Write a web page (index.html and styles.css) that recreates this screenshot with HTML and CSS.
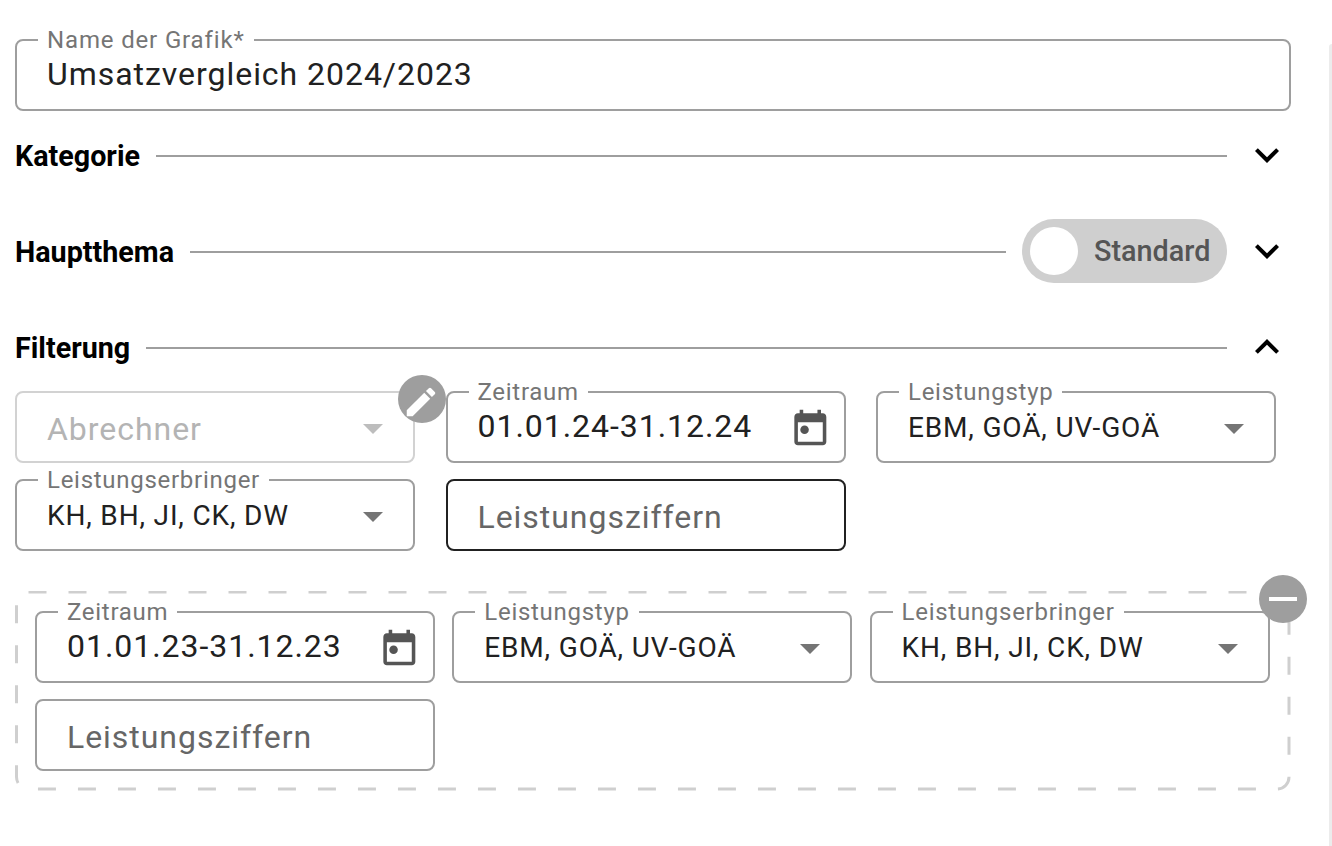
FILE: index.html
```html
<!DOCTYPE html>
<html lang="de">
<head>
<meta charset="utf-8">
<title>Grafik</title>
<link rel="stylesheet" href="styles.css">
</head>
<body>
<svg class="defs" width="0" height="0" aria-hidden="true">
  <symbol id="cal" viewBox="0 0 24 24"><path fill-rule="evenodd" d="M19 3h-1V1h-2v2H8V1H6v2H5c-1.1 0-2 .9-2 2v14c0 1.1.9 2 2 2h14c1.1 0 2-.9 2-2V5c0-1.1-.9-2-2-2zm0 16H5V8h14v11z"/><circle cx="8.75" cy="12.25" r="2.4"/></symbol>
  <symbol id="arrow" viewBox="0 0 24 24"><path d="M7 10l5 5 5-5z"/></symbol>
  <symbol id="down" viewBox="0 0 24 24"><path d="M16.59 8.59 12 13.17 7.41 8.59 6 10l6 6 6-6z"/></symbol>
  <symbol id="up" viewBox="0 0 24 24"><path d="M12 8l-6 6 1.41 1.41L12 10.83l4.59 4.58L18 14z"/></symbol>
</svg>
<main class="page">
  <div class="field">
    <span class="label name">Name der Grafik*</span>
    <span class="value large">Umsatzvergleich 2024/2023</span>
  </div>

  <section class="head">
    <h2>Kategorie</h2><span class="rule"></span>
    <svg class="chev"><use href="#down"/></svg>
  </section>
  <section class="head">
    <h2>Hauptthema</h2><span class="rule"></span>
    <div class="switch"><span class="thumb"></span><span class="switch-text">Standard</span></div>
    <svg class="chev"><use href="#down"/></svg>
  </section>
  <section class="head last">
    <h2>Filterung</h2><span class="rule"></span>
    <svg class="chev"><use href="#up"/></svg>
  </section>

  <div class="grid main-grid">
    <div class="field disabled">
      <span class="placeholder">Abrechner</span>
      <svg class="arrow"><use href="#arrow"/></svg>
      <span class="badge"><svg class="pencil" viewBox="0 0 24 24"><path d="M3 17.25V21h3.75L17.81 9.94l-3.75-3.75L3 17.25zM20.71 7.04c.39-.39.39-1.02 0-1.41l-2.34-2.34a.9959.9959 0 0 0-1.41 0l-1.83 1.83 3.75 3.75 1.83-1.83z"/></svg></span>
    </div>
    <div class="field">
      <span class="label">Zeitraum</span>
      <span class="value date">01.01.24-31.12.24</span>
      <svg class="cal"><use href="#cal"/></svg>
    </div>
    <div class="field">
      <span class="label">Leistungstyp</span>
      <span class="value">EBM, GOÄ, UV-GOÄ</span>
      <svg class="arrow"><use href="#arrow"/></svg>
    </div>
    <div class="field">
      <span class="label">Leistungserbringer</span>
      <span class="value">KH, BH, JI, CK, DW</span>
      <svg class="arrow"><use href="#arrow"/></svg>
    </div>
    <div class="field focused">
      <span class="placeholder">Leistungsziffern</span>
    </div>
  </div>

  <div class="compare">
    <svg class="dash" width="1276" height="200"><rect x="1.5" y="1" width="1272.5" height="197" rx="12" ry="12"/></svg>
    <span class="badge minus"><svg class="bar" viewBox="0 0 24 24"><path d="M19 13H5v-2h14v2z"/></svg></span>
    <div class="grid inner-grid">
      <div class="field">
        <span class="label">Zeitraum</span>
        <span class="value date">01.01.23-31.12.23</span>
        <svg class="cal"><use href="#cal"/></svg>
      </div>
      <div class="field">
        <span class="label">Leistungstyp</span>
        <span class="value">EBM, GOÄ, UV-GOÄ</span>
        <svg class="arrow"><use href="#arrow"/></svg>
      </div>
      <div class="field">
        <span class="label">Leistungserbringer</span>
        <span class="value">KH, BH, JI, CK, DW</span>
        <svg class="arrow"><use href="#arrow"/></svg>
      </div>
      <div class="field">
        <span class="placeholder">Leistungsziffern</span>
      </div>
    </div>
  </div>
</main>
<div class="scrollbar"></div>
</body>
</html>
```

FILE: styles.css
```css
* { box-sizing: border-box; }
html, body { margin: 0; height: 100%; background: #fff; overflow: hidden; }
body { font-family: Roboto, "Liberation Sans", sans-serif; color: #212121; }
.defs { position: absolute; }
.page { width: 1291px; padding: 39px 0 0 15px; }

.field {
  position: relative;
  display: flex;
  align-items: center;
  height: 72px;
  padding: 0 30px;
  border: 2px solid #9e9e9e;
  border-radius: 8px;
  background: #fff;
}
.label {
  position: absolute;
  top: -13px;
  left: 21px;
  padding: 0 9px;
  background: #fff;
  font-size: 24px;
  line-height: 24px;
  letter-spacing: 0.72px;
  color: #757575;
  white-space: nowrap;
}
.label.name { letter-spacing: 0.85px; }
.value { font-size: 28px; letter-spacing: 0.84px; white-space: nowrap; margin-top: 1px; }
.value.large { font-size: 32px; letter-spacing: 0.96px; margin-top: -2px; }
.value.date { font-size: 32px; letter-spacing: 0.96px; margin-top: -3px; }
.placeholder { font-size: 32px; letter-spacing: 0.96px; color: #666; margin-top: 3px; white-space: nowrap; }

.focused { border-color: #212121; }
.disabled { border-color: #d2d2d2; }
.disabled .placeholder { color: #b4b4b4; }
.disabled .arrow { fill: #bdbdbd; }

.arrow { position: absolute; right: 16px; top: 11px; width: 48px; height: 48px; fill: #757575; }
.cal { position: absolute; right: 12.2px; top: 15.2px; width: 42.67px; height: 42.67px; fill: #555; }

.head { display: flex; align-items: center; height: 64px; margin-top: 12px; margin-bottom: 32px; }
.head + .head { margin-top: 0; }
.head.last { margin-bottom: 12px; }
.head h2 { margin: 2px 0 0; font-size: 28.7px; font-weight: 700; line-height: 32px; color: #000; white-space: nowrap; }
.rule { flex: 1; height: 2px; margin: 2px 0 0 16px; background: #9e9e9e; width: 1px; }
.chev { width: 48px; height: 48px; margin-left: 16px; flex: none; fill: #000; }

.switch { display: flex; align-items: center; flex: none; width: 205px; height: 64px; margin-left: 16px; padding-left: 8px; border-radius: 32px; background: #cfcfcf; }
.thumb { width: 48px; height: 48px; border-radius: 50%; background: #fff; flex: none; }
.switch-text { margin-left: 16px; font-size: 28.8px; font-weight: 500; color: #555; white-space: nowrap; }

.grid { display: grid; grid-template-columns: repeat(3, 400px); row-gap: 16px; }
.main-grid { column-gap: 30.5px; }
.inner-grid { column-gap: 17.3px; }

.compare { position: relative; width: 1276px; height: 200px; margin-top: 40px; padding: 20px 20px 0; }
.dash { position: absolute; left: 0; top: 0; }
.dash rect { fill: none; stroke: #cfcfcf; stroke-width: 3; stroke-dasharray: 18 22; }

.badge {
  position: absolute;
  display: flex;
  align-items: center;
  justify-content: center;
  width: 48px;
  height: 48px;
  border-radius: 50%;
  background: #9e9e9e;
  top: -18px;
  right: -33px;
  z-index: 2;
}
.minus { top: -16px; right: -16px; }
.pencil { width: 38px; height: 38px; margin: 6px 2px 0 0; fill: #fff; }
.bar { width: 48px; height: 48px; fill: #fff; }

.scrollbar { position: fixed; top: 44px; bottom: 0; right: 0; width: 3px; background: #ececec; border-top-left-radius: 3px; }
```
